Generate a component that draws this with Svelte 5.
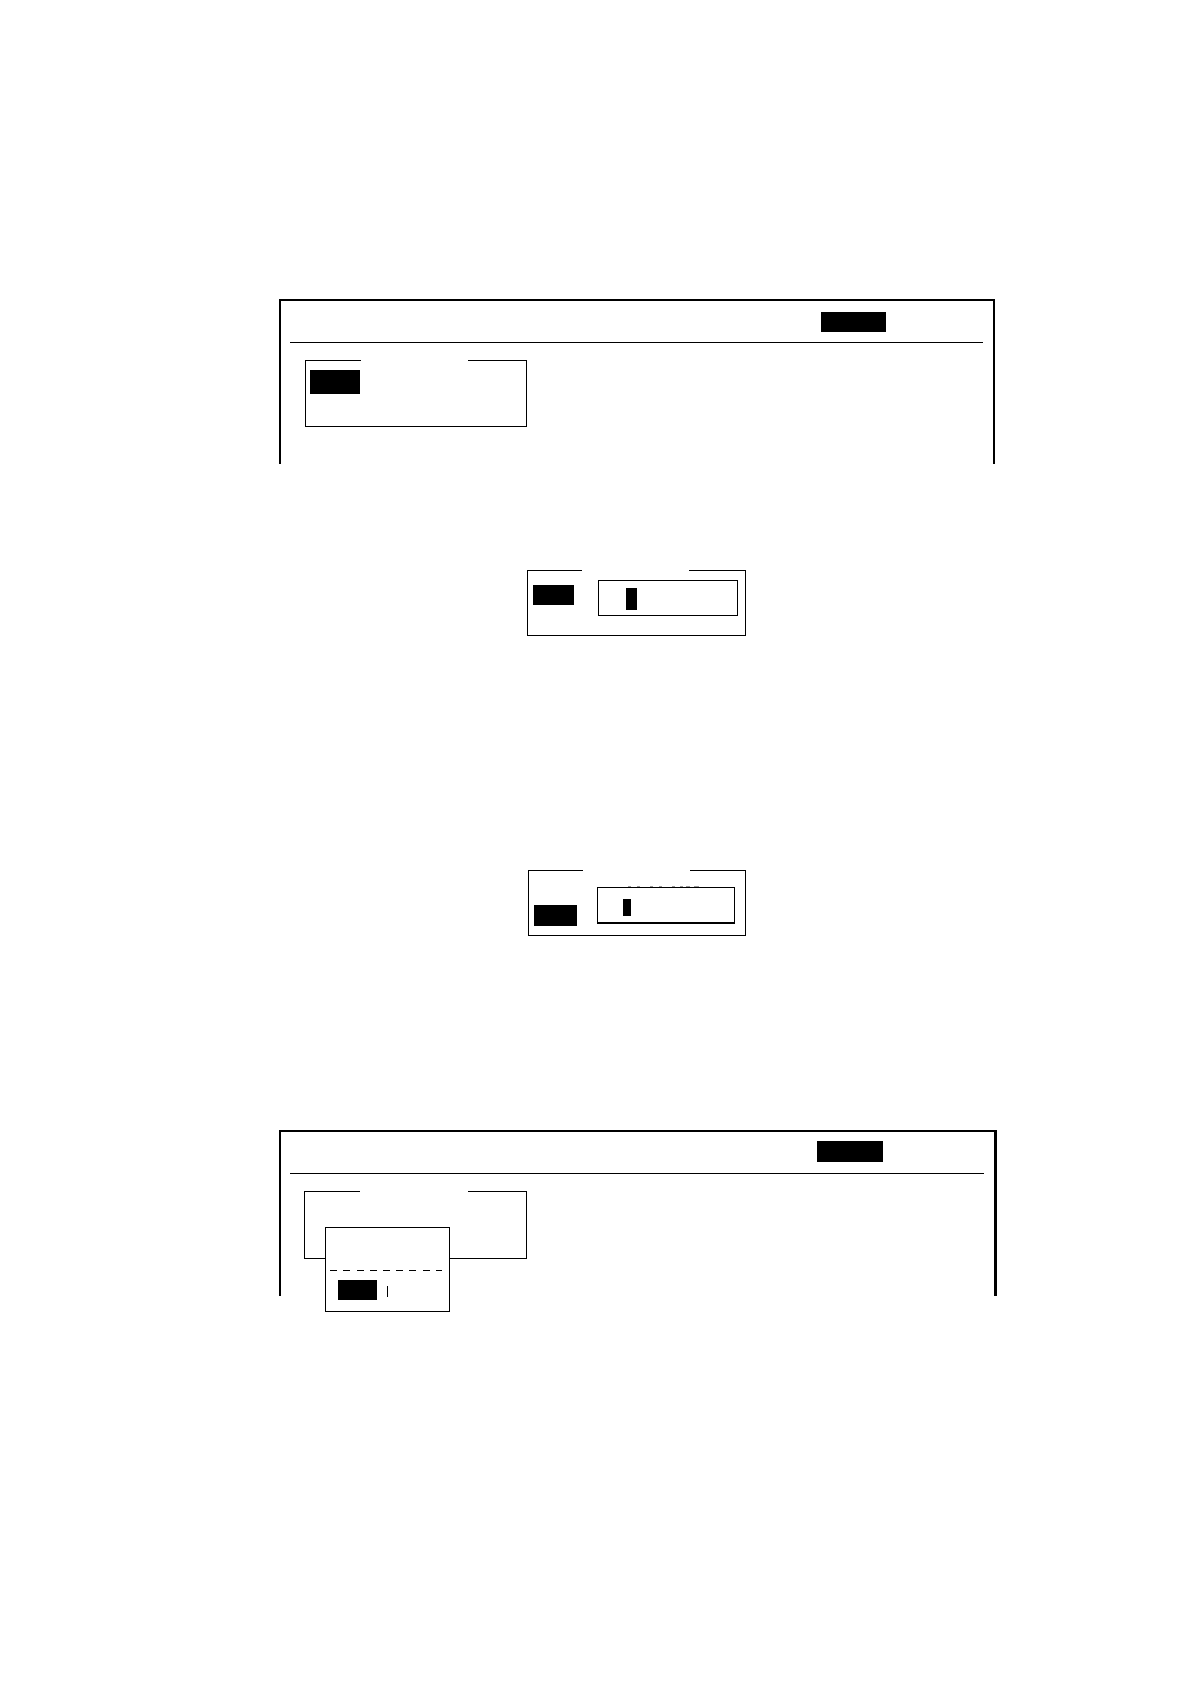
<script lang="ts">
	// tops of the characters that show above the entry box
	const tops = [
		[0, 3],
		[9, 3],
		[22, 3],
		[31, 3],
		[44, 3],
		[52, 3],
		[58, 4],
		[66, 5]
	];

	const dashes = [0, 13, 27, 40, 53, 66, 79, 93, 106];
</script>

<main class="page">
	<section class="screen">
		<header class="screen__bar">
			<span class="mark mark--tab"></span>
		</header>
		<fieldset class="panel panel--menu">
			<legend></legend>
			<div class="panel__body">
				<span class="mark mark--item"></span>
			</div>
		</fieldset>
	</section>

	<fieldset class="panel panel--upper">
		<legend></legend>
		<div class="panel__body">
			<span class="mark mark--upper"></span>
			<input class="entry entry--upper" type="text" aria-label="Entry" />
		</div>
	</fieldset>

	<fieldset class="panel panel--lower">
		<legend></legend>
		<div class="panel__body">
			<span class="mark mark--lower"></span>
			<div class="field">
				<svg class="field__tops" width="72" height="1" aria-hidden="true">
					{#each tops as [x, width] (x)}
						<rect {x} y="0" {width} height="1" />
					{/each}
				</svg>
				<input class="entry entry--lower" type="text" aria-label="Entry" />
			</div>
		</div>
	</fieldset>

	<section class="screen screen--last">
		<header class="screen__bar">
			<span class="mark mark--tab"></span>
		</header>
		<div class="stack">
			<fieldset class="panel panel--menu">
				<legend></legend>
			</fieldset>
			<div class="popup">
				<svg class="popup__rule" width="112" height="1" aria-hidden="true">
					{#each dashes as x (x)}
						<rect {x} y="0" width="7" height="1" />
					{/each}
				</svg>
				<div class="popup__row">
					<span class="mark mark--choice"></span>
					<span class="caret"></span>
				</div>
			</div>
		</div>
	</section>
</main>

<style>
	:global(body) {
		margin: 0;
		background: #fff;
	}

	.page {
		box-sizing: border-box;
		min-height: 100vh;
		padding: 299px 195px 0 279px;
		display: flex;
		flex-direction: column;
		font-family: "Liberation Sans", sans-serif;
	}

	.page * {
		box-sizing: border-box;
	}

	.mark {
		display: block;
		flex: none;
		background: #000;
	}

	.screen {
		border: 2px solid #000;
		border-bottom: 0;
		padding-bottom: 37px;
	}

	.screen__bar {
		display: flex;
		justify-content: flex-end;
		margin: 0 10px 17px 9px;
		padding: 11px 97px 10px 0;
		border-bottom: 1px solid #000;
	}

	.mark--tab {
		width: 65px;
		height: 20px;
	}

	.panel {
		min-width: 0;
		margin: 0;
		padding: 0;
		border: 1px solid #000;
	}

	.panel legend {
		width: 107px;
		height: 1px;
		margin-left: 54px;
		padding: 0;
	}

	.panel__body {
		display: flex;
		align-items: flex-start;
	}

	.panel--menu {
		width: 222px;
		height: 67px;
		margin-left: 24px;
	}

	.panel--menu legend {
		margin-left: 55px;
	}

	.panel--menu .panel__body {
		padding: 9px 4px;
	}

	.mark--item {
		width: 50px;
		height: 24px;
	}

	.panel--upper {
		width: 219px;
		height: 66px;
		margin: 106px 0 0 248px;
	}

	.panel--upper .panel__body {
		padding: 9px 7px 0 5px;
		justify-content: space-between;
	}

	.mark--upper {
		width: 41px;
		height: 20px;
		margin-top: 5px;
	}

	.entry {
		display: block;
		margin: 0;
		border: 1px solid #000;
		border-radius: 0;
		outline: 0;
		font: 16px "Liberation Sans", sans-serif;
		background: linear-gradient(#000, #000) no-repeat #fff;
	}

	.entry--upper {
		width: 140px;
		height: 36px;
		padding: 0 10px 0 38px;
		background-size: 11px 22px;
		background-position: 27px 7px;
	}

	.panel--lower {
		width: 218px;
		height: 66px;
		margin: 234px 0 0 249px;
	}

	.panel--lower .panel__body {
		padding: 15px 10px 0 5px;
		justify-content: space-between;
	}

	.mark--lower {
		width: 43px;
		height: 21px;
		margin-top: 19px;
	}

	.field__tops {
		display: block;
		margin-left: 31px;
		fill: #999;
	}

	.entry--lower {
		width: 138px;
		height: 37px;
		padding: 0 10px 0 34px;
		border-bottom-width: 2px;
		background-size: 8px 17px;
		background-position: 25px 11px;
	}

	.screen--last {
		margin: 194px -2px 0 0;
		border-right-width: 3px;
	}

	.screen--last .screen__bar {
		padding: 9px 101px 11px 0;
	}

	.screen--last .mark--tab {
		width: 66px;
		height: 21px;
	}

	.stack {
		position: relative;
		margin-left: 23px;
	}

	.stack .panel--menu {
		width: 223px;
		height: 68px;
		margin-left: 0;
	}

	.stack legend {
		width: 108px;
	}

	.popup {
		position: absolute;
		top: 36px;
		left: 21px;
		width: 125px;
		height: 85px;
		padding: 42px 4px 0;
		border: 1px solid #000;
		background: #fff;
	}

	.popup__rule {
		display: block;
	}

	.popup__row {
		display: flex;
		align-items: flex-start;
		gap: 10px;
		padding: 9px 8px 0;
	}

	.mark--choice {
		width: 39px;
		height: 20px;
	}

	.caret {
		width: 1px;
		height: 11px;
		margin-top: 6px;
		background: #000;
	}
</style>
